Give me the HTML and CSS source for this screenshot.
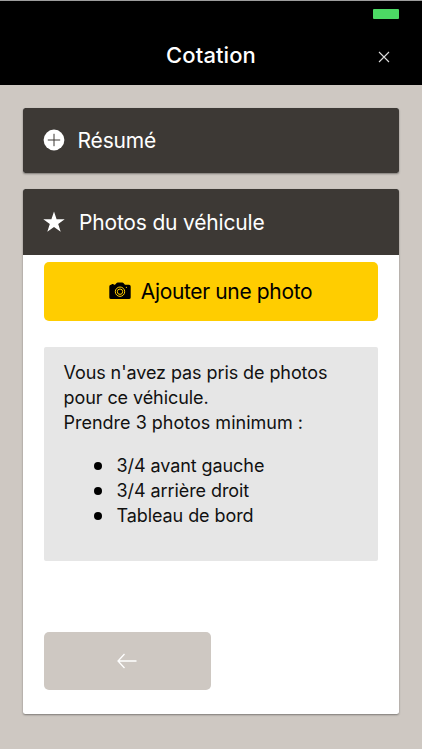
FILE: index.html
```
<!DOCTYPE html>
<html lang="fr">
<head>
<meta charset="utf-8">
<title>Cotation</title>
<link rel="stylesheet" href="styles.css">
</head>
<body>
<div class="app">
  <header class="navbar">
    <div class="status"><span class="battery"></span></div>
    <div class="title-row">
      <h1 class="title">Cotation</h1>
      <svg class="close" viewBox="0 0 12 12"><path d="M1 1l10 10M11 1L1 11"/></svg>
    </div>
  </header>
  <main class="content">
    <section class="card">
      <h2 class="card-header">
        <svg class="head-icon" viewBox="0 0 22 22"><circle cx="11" cy="11" r="10.4" fill="#fff"/><path d="M11 4.800v12.400M4.800 11h12.400" stroke="#3d3935" stroke-width="1"/></svg>
        <span class="label-resume">Résumé</span>
      </h2>
    </section>
    <section class="card card-photos">
      <h2 class="card-header">
        <svg class="head-icon" viewBox="0 0 22 22"><path fill="#fff" d="M11 .5l2.600 7.700h8.100l-6.500 4.800 2.500 7.700-6.700-4.800-6.700 4.800L6.800 13 .3 8.200h8.100z"/></svg>
        <span class="label-photos">Photos du véhicule</span>
      </h2>
      <div class="card-body">
        <button class="add" type="button">
          <svg class="camera" viewBox="0 0 22 18"><path d="M2 2.700h.6v-.6h2v.6H6L7.600.9Q8 .5 8.600.5h4.800q.6 0 1 .4L16 2.700h4q1.700 0 1.700 1.700v11q0 1.700-1.700 1.700H2Q.3 17.100.3 15.400v-11Q.3 2.700 2 2.700z"/><circle class="ring" cx="11" cy="9.700" r="4.700"/><circle class="ring" cx="11" cy="9.700" r="2.700"/><circle cx="17.400" cy="5.300" r=".6" fill="#ffcd00"/></svg>
          <span class="add-label">Ajouter une photo</span>
        </button>
        <div class="notice">
          <p class="line">Vous n'avez pas pris de photos</p>
          <p class="line">pour ce véhicule.</p>
          <p class="line line-min">Prendre 3 photos minimum :</p>
          <ul class="list">
            <li>3/4 avant gauche</li>
            <li>3/4 arrière droit</li>
            <li>Tableau de bord</li>
          </ul>
        </div>
        <button class="back" type="button" aria-label="Retour">
          <svg class="arrow" viewBox="0 0 20 16"><path d="M19.500 8H1M7.500 1L1 8l6.500 7"/></svg>
        </button>
      </div>
    </section>
  </main>
</div>
</body>
</html>
```
FILE: styles.css
```
* { box-sizing: border-box; }
body {
  margin: 0;
  background: #fff;
  font-family: Inter, "Liberation Sans", sans-serif;
}
h1, h2, p, ul { margin: 0; padding: 0; font-weight: 400; }
button { border: 0; padding: 0; font: inherit; color: inherit; }
svg { display: block; flex: none; }
.app {
  height: 749px;
  background: #cec8c2;
}
.navbar {
  height: 85px;
  background: #000;
  border-top: 1px solid #9d9d9d;
}
.status {
  display: flex;
  justify-content: flex-end;
  padding: 8px 23px 0 0;
  height: 26px;
}
.battery {
  width: 26px;
  height: 10px;
  border-radius: 1px;
  background: #4cd964;
}
.title-row {
  display: grid;
  grid-template-columns: 1fr auto 1fr;
  align-items: center;
  height: 56px;
}
.title {
  grid-column: 2;
  color: #fff;
  font-size: 22px;
  font-weight: 500;
  line-height: 28px;
  letter-spacing: .1px;
}
.close {
  width: 12px;
  height: 12px;
  justify-self: end;
  margin: 4px 32px 0 0;
  fill: none;
  stroke: #ddd;
  stroke-width: 1.100;
}
.content {
  display: flex;
  flex-direction: column;
  gap: 16px;
  padding: 22.500px 23px 0 22.500px;
}
.card {
  background: #fff;
  border-radius: 2.500px;
  overflow: hidden;
  box-shadow: 0 1px 2px rgba(0, 0, 0, .4);
}
.card-photos { height: 525px; }
.card-header {
  display: flex;
  align-items: center;
  height: 65.500px;
  padding-left: 20.500px;
  background: #3d3935;
  color: #fff;
  font-size: 21px;
  line-height: 26px;
}
.head-icon { width: 22px; height: 22px; }
.label-resume { margin: 2px 0 0 12.500px; letter-spacing: -.15px; }
.label-photos { margin: 2px 0 0 14px; letter-spacing: -.18px; }
.card-body { padding: 7px 21px 0; }
.add {
  display: flex;
  align-items: center;
  justify-content: center;
  width: 100%;
  height: 59px;
  border-radius: 5px;
  background: #ffcd00;
  color: #000;
  font-size: 21px;
}
.add-label { margin-top: 1px; letter-spacing: -.35px; }
.camera { width: 22px; height: 18px; margin-right: 9.500px; }
.ring { fill: none; stroke: #ffcd00; stroke-width: 1; }
.notice {
  height: 213.500px;
  margin-top: 26.500px;
  padding: 12.500px 20px 0;
  border-radius: 2px;
  background: #e6e6e6;
  color: #111;
  font-size: 18px;
  line-height: 25px;
  letter-spacing: -.08px;
}
.line { white-space: nowrap; }
.line-min { letter-spacing: 0; }
.list {
  list-style: none;
  margin-top: 18.500px;
  padding-left: 30.500px;
}
.list li {
  display: flex;
  align-items: center;
  gap: 14.500px;
  white-space: nowrap;
}
.list li::before {
  content: "";
  width: 8px;
  height: 8px;
  border-radius: 50%;
  background: #000;
}
.back {
  display: flex;
  align-items: center;
  justify-content: center;
  width: 167px;
  height: 58.500px;
  margin-top: 71px;
  border-radius: 5px;
  background: #cec8c2;
}
.arrow {
  width: 20px;
  height: 16px;
  fill: none;
  stroke: #fff;
  stroke-width: 1.300;
}
```
